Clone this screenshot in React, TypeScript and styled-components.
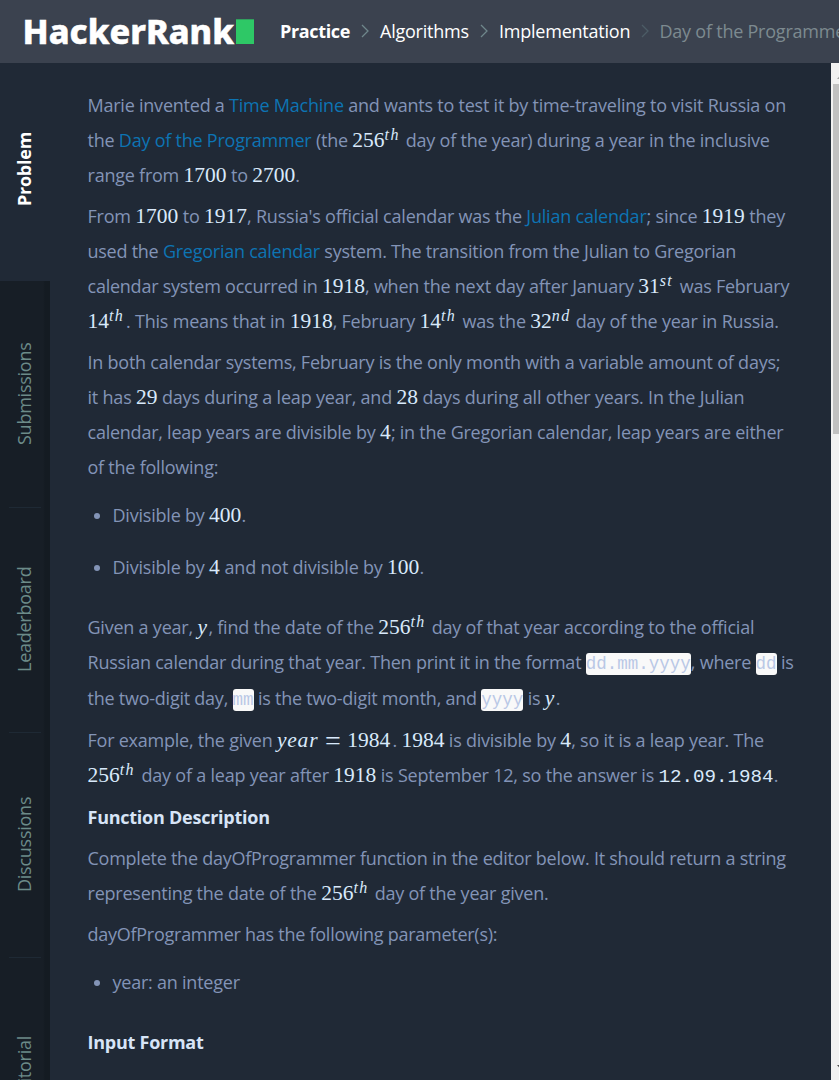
import React from 'react';
import styled, { createGlobalStyle } from 'styled-components';

const GlobalStyle = createGlobalStyle`
  * { box-sizing: border-box; }
  html, body { margin: 0; padding: 0; overflow: hidden; background: #202936; }
`;

const Page = styled.div`
  width: 839px;
  height: 1080px;
  display: flex;
  flex-direction: column;
  overflow: hidden;
  background: #202936;
  color: #8394b7;
  font-family: 'Open Sans', 'Noto Sans', sans-serif;
  font-size: 18px;
`;

const Header = styled.header`
  flex: none;
  height: 63px;
  padding-left: 24px;
  display: flex;
  align-items: center;
  background: #3b424f;
  overflow: hidden;
`;

const Logo = styled.svg`
  flex: none;
  width: 232px;
  height: 40px;
  margin-right: 24px;
`;

const Crumbs = styled.nav`
  flex: none;
  display: flex;
  align-items: center;
  padding-bottom: 2px;
  white-space: nowrap;
`;

const Crumb = styled.a<{ $current?: boolean; $strong?: boolean; $width: number }>`
  width: ${(p) => p.$width}px;
  color: ${(p) => (p.$current ? '#7d8a90' : '#ffffff')};
  font-weight: ${(p) => (p.$strong ? 700 : 400)};
  letter-spacing: ${(p) => (p.$strong ? '-0.35px' : '-0.23px')};
`;

const Arrow = styled.svg<{ $dim?: boolean }>`
  width: 8px;
  height: 14px;
  margin: 0 11px;
  fill: none;
  stroke: ${(p) => (p.$dim ? '#4c5c66' : '#6f878c')};
  stroke-width: 1.3;
`;

const Body = styled.div`
  flex: 1;
  min-height: 0;
  display: flex;
`;

const Sidebar = styled.nav`
  flex: none;
  width: 50px;
  display: flex;
  flex-direction: column;
  overflow: hidden;
`;

const Tab = styled.a<{ $active?: boolean; $height: number }>`
  flex: none;
  height: ${(p) => p.$height}px;
  padding-bottom: ${(p) => (p.$active ? 5 : 0)}px;
  display: flex;
  flex-direction: column;
  align-items: center;
  justify-content: center;
  background: ${(p) =>
    p.$active ? '#202936' : 'linear-gradient(to right, #171e26 43px, #141b22 45px)'};
  color: ${(p) => (p.$active ? '#ffffff' : '#6c8b89')};
  font-weight: ${(p) => (p.$active ? 700 : 400)};
`;

const TabLabel = styled.span`
  flex: 1;
  display: flex;
  justify-content: center;
  writing-mode: vertical-rl;
  transform: rotate(180deg);
  align-items: center;
  text-align: center;
  line-height: 24px;
  letter-spacing: -0.25px;
  margin-right: 2px;
  padding-top: 1px;
`;

const Divider = styled.span`
  flex: none;
  width: 32px;
  height: 1px;
  background: #1e2934;
`;

const Content = styled.main`
  flex: 1;
  padding: 25px 0 0 37.5px;
  overflow: hidden;
`;

const Paragraph = styled.p<{ $gap?: number }>`
  margin: 0 0 ${(p) => p.$gap ?? 6}px;
`;

const Line = styled.span<{ $tall?: boolean; $spacing?: number }>`
  display: block;
  height: ${(p) => (p.$tall ? 36 : 35)}px;
  line-height: 35px;
  white-space: nowrap;
  letter-spacing: ${(p) => p.$spacing ?? -0.23}px;
`;

const Link = styled.a`
  color: #0d74b3;
`;

const Heading = styled.strong`
  color: #d7e4f7;
  font-weight: 700;
`;

const MathBox = styled.span<{ $width: number }>`
  display: inline-block;
  width: ${(p) => p.$width}px;
  height: 35px;
  line-height: 35px;
  vertical-align: top;
  color: #d9e9fb;
  font-family: 'Liberation Serif', serif;
  font-size: 21.5px;
  letter-spacing: 0;
`;

const Power = styled.sup`
  font-size: 16px;
  font-style: italic;
  line-height: 0;
  letter-spacing: 1.4px;
  vertical-align: 7.5px;
`;

const Variable = styled.i`
  letter-spacing: 0.8px;
`;

const Equals = styled.span`
  display: inline-block;
  width: 29px;
  text-align: center;
  font-size: 28px;
  line-height: 20px;
  vertical-align: -3px;
`;

const Code = styled.code`
  display: inline-block;
  height: 22px;
  line-height: 22px;
  border-radius: 3px;
  background: #f9f9f9;
  color: #b9c8e6;
  font-family: 'Liberation Mono', monospace;
  font-size: 17.5px;
  letter-spacing: 0;
`;

const Answer = styled.code`
  color: #d9e9fb;
  font-family: 'Liberation Mono', monospace;
  font-size: 19.2px;
  letter-spacing: 0;
`;

const List = styled.ul`
  margin: 13px 0 25px;
  padding: 0 0 0 25px;
  display: flex;
  flex-direction: column;
  gap: 17px;
  list-style: none;
`;

const Item = styled.li`
  display: flex;
  align-items: center;
  margin-left: -18.5px;
  &::before {
    content: '';
    width: 6px;
    height: 6px;
    margin: 1px 12.5px 0 0;
    border-radius: 50%;
    background: #8394b7;
  }
`;

const Scrollbar = styled.div`
  flex: none;
  width: 8px;
  padding: 12px 0 11px 2px;
  display: flex;
  flex-direction: column;
  overflow: hidden;
  background: #f1f1f1;
`;

const ScrollArrow = styled.svg<{ $end?: boolean }>`
  flex: none;
  width: 15px;
  height: 4px;
  margin-top: ${(p) => (p.$end ? 'auto' : '0')};
  fill: ${(p) => (p.$end ? '#505050' : '#a3a3a3')};
`;

const Thumb = styled.div`
  flex: none;
  width: 13px;
  height: 350px;
  margin-top: 5px;
  background: #c1c1c1;
`;

const M = ({ w, n, p, v, eq }: { w: number; n?: string; p?: string; v?: string; eq?: boolean }) => (
  <MathBox $width={w}>
    {v && <Variable>{v}</Variable>}
    {eq && <Equals>=</Equals>}
    {n}
    {p && <Power>{p}</Power>}
  </MathBox>
);

const Chevron = ({ dim }: { dim?: boolean }) => (
  <Arrow $dim={dim} viewBox="0 0 8 14">
    <path d="M1 1L7 7L1 13" />
  </Arrow>
);

const tabs = [
  { label: 'Submissions', height: 227 },
  { label: 'Leaderboard', height: 225 },
  { label: 'Discussions', height: 225 },
  { label: 'Editorial', height: 225 },
];

export default function App() {
  return (
    <Page>
      <GlobalStyle />
      <Header>
        <Logo viewBox="0 0 232 40">
          <text
            x="-1.5"
            y="31.8"
            fill="#fff"
            stroke="#fff"
            strokeWidth="0.5"
            fontFamily="'Noto Sans', 'Open Sans', sans-serif"
            fontWeight="800"
            fontSize="33.6"
            textLength="211.5"
            lengthAdjust="spacingAndGlyphs"
          >
            HackerRank
          </text>
          <rect x="212" y="7.3" width="18" height="24.7" fill="#2ec866" />
        </Logo>
        <Crumbs>
          <Crumb $strong $width={70}>Practice</Crumb>
          <Chevron />
          <Crumb $width={89}>Algorithms</Crumb>
          <Chevron />
          <Crumb $width={130.5}>Implementation</Crumb>
          <Chevron dim />
          <Crumb $current $width={190}>Day of the Programmer</Crumb>
        </Crumbs>
      </Header>
      <Body>
        <Sidebar>
          <Tab $active $height={218}>
            <TabLabel>Problem</TabLabel>
          </Tab>
          {tabs.map((t) => (
            <Tab key={t.label} $height={t.height}>
              <TabLabel>{t.label}</TabLabel>
              <Divider />
            </Tab>
          ))}
        </Sidebar>
        <Content>
          <Paragraph>
            <Line>Marie invented a <Link>Time Machine</Link> and wants to test it by time-traveling to visit Russia on</Line>
            <Line>the <Link>Day of the Programmer</Link> (the <M w={49} n="256" p="th" /> day of the year) during a year in the inclusive</Line>
            <Line>range from <M w={43} n="1700" /> to <M w={43} n="2700" />.</Line>
          </Paragraph>
          <Paragraph>
            <Line $spacing={-0.21}>From <M w={43} n="1700" /> to <M w={43} n="1917" />, Russia's official calendar was the <Link>Julian calendar</Link>; since <M w={43} n="1919" /> they</Line>
            <Line $spacing={-0.25}>used the <Link>Gregorian calendar</Link> system. The transition from the Julian to Gregorian</Line>
            <Line $spacing={-0.24}>calendar system occurred in <M w={43} n="1918" />, when the next day after January <M w={37} n="31" p="st" /> was February</Line>
            <Line $spacing={-0.21}><M w={38.5} n="14" p="th" />. This means that in <M w={43} n="1918" />, February <M w={38.5} n="14" p="th" /> was the <M w={41} n="32" p="nd" /> day of the year in Russia.</Line>
          </Paragraph>
          <Paragraph>
            <Line>In both calendar systems, February is the only month with a variable amount of days;</Line>
            <Line $spacing={-0.2}>it has <M w={21.5} n="29" /> days during a leap year, and <M w={21.5} n="28" /> days during all other years. In the Julian</Line>
            <Line $spacing={-0.24}>calendar, leap years are divisible by <M w={11} n="4" />; in the Gregorian calendar, leap years are either</Line>
            <Line>of the following:</Line>
          </Paragraph>
          <List>
            <Item><Line $spacing={-0.21}>Divisible by <M w={32.5} n="400" />.</Line></Item>
            <Item><Line $spacing={-0.21}>Divisible by <M w={11} n="4" /> and not divisible by <M w={32.5} n="100" />.</Line></Item>
          </List>
          <Paragraph>
            <Line $spacing={-0.22}>Given a year, <M w={11} v="y" />, find the date of the <M w={49} n="256" p="th" /> day of that year according to the official</Line>
            <Line $tall $spacing={-0.23}>Russian calendar during that year. Then print it in the format <Code>dd.mm.yyyy</Code>, where <Code>dd</Code> is</Line>
            <Line $tall $spacing={-0.24}>the two-digit day, <Code>mm</Code> is the two-digit month, and <Code>yyyy</Code> is <M w={11} v="y" />.</Line>
          </Paragraph>
          <Paragraph $gap={7}>
            <Line $spacing={-0.23}>For example, the given <M w={115.5} v="year" eq n="1984" />. <M w={43} n="1984" /> is divisible by <M w={11} n="4" />, so it is a leap year. The</Line>
            <Line $spacing={-0.21}><M w={49.5} n="256" p="th" /> day of a leap year after <M w={43} n="1918" /> is September 12, so the answer is <Answer>12.09.1984</Answer>.</Line>
          </Paragraph>
          <Paragraph>
            <Line $spacing={-0.25}><Heading>Function Description</Heading></Line>
          </Paragraph>
          <Paragraph>
            <Line $spacing={-0.25}>Complete the dayOfProgrammer function in the editor below. It should return a string</Line>
            <Line>representing the date of the <M w={49} n="256" p="th" /> day of the year given.</Line>
          </Paragraph>
          <Paragraph>
            <Line $spacing={-0.26}>dayOfProgrammer has the following parameter(s):</Line>
          </Paragraph>
          <List>
            <Item><Line>year: an integer</Line></Item>
          </List>
          <Paragraph>
            <Line $spacing={-0.25}><Heading>Input Format</Heading></Line>
          </Paragraph>
        </Content>
        <Scrollbar>
          <ScrollArrow viewBox="0 0 15 4"><path d="M4 4L7.5 0L11 4Z" /></ScrollArrow>
          <Thumb />
          <ScrollArrow $end viewBox="0 0 15 4"><path d="M4 0L7.5 4L11 0Z" /></ScrollArrow>
        </Scrollbar>
      </Body>
    </Page>
  );
}
